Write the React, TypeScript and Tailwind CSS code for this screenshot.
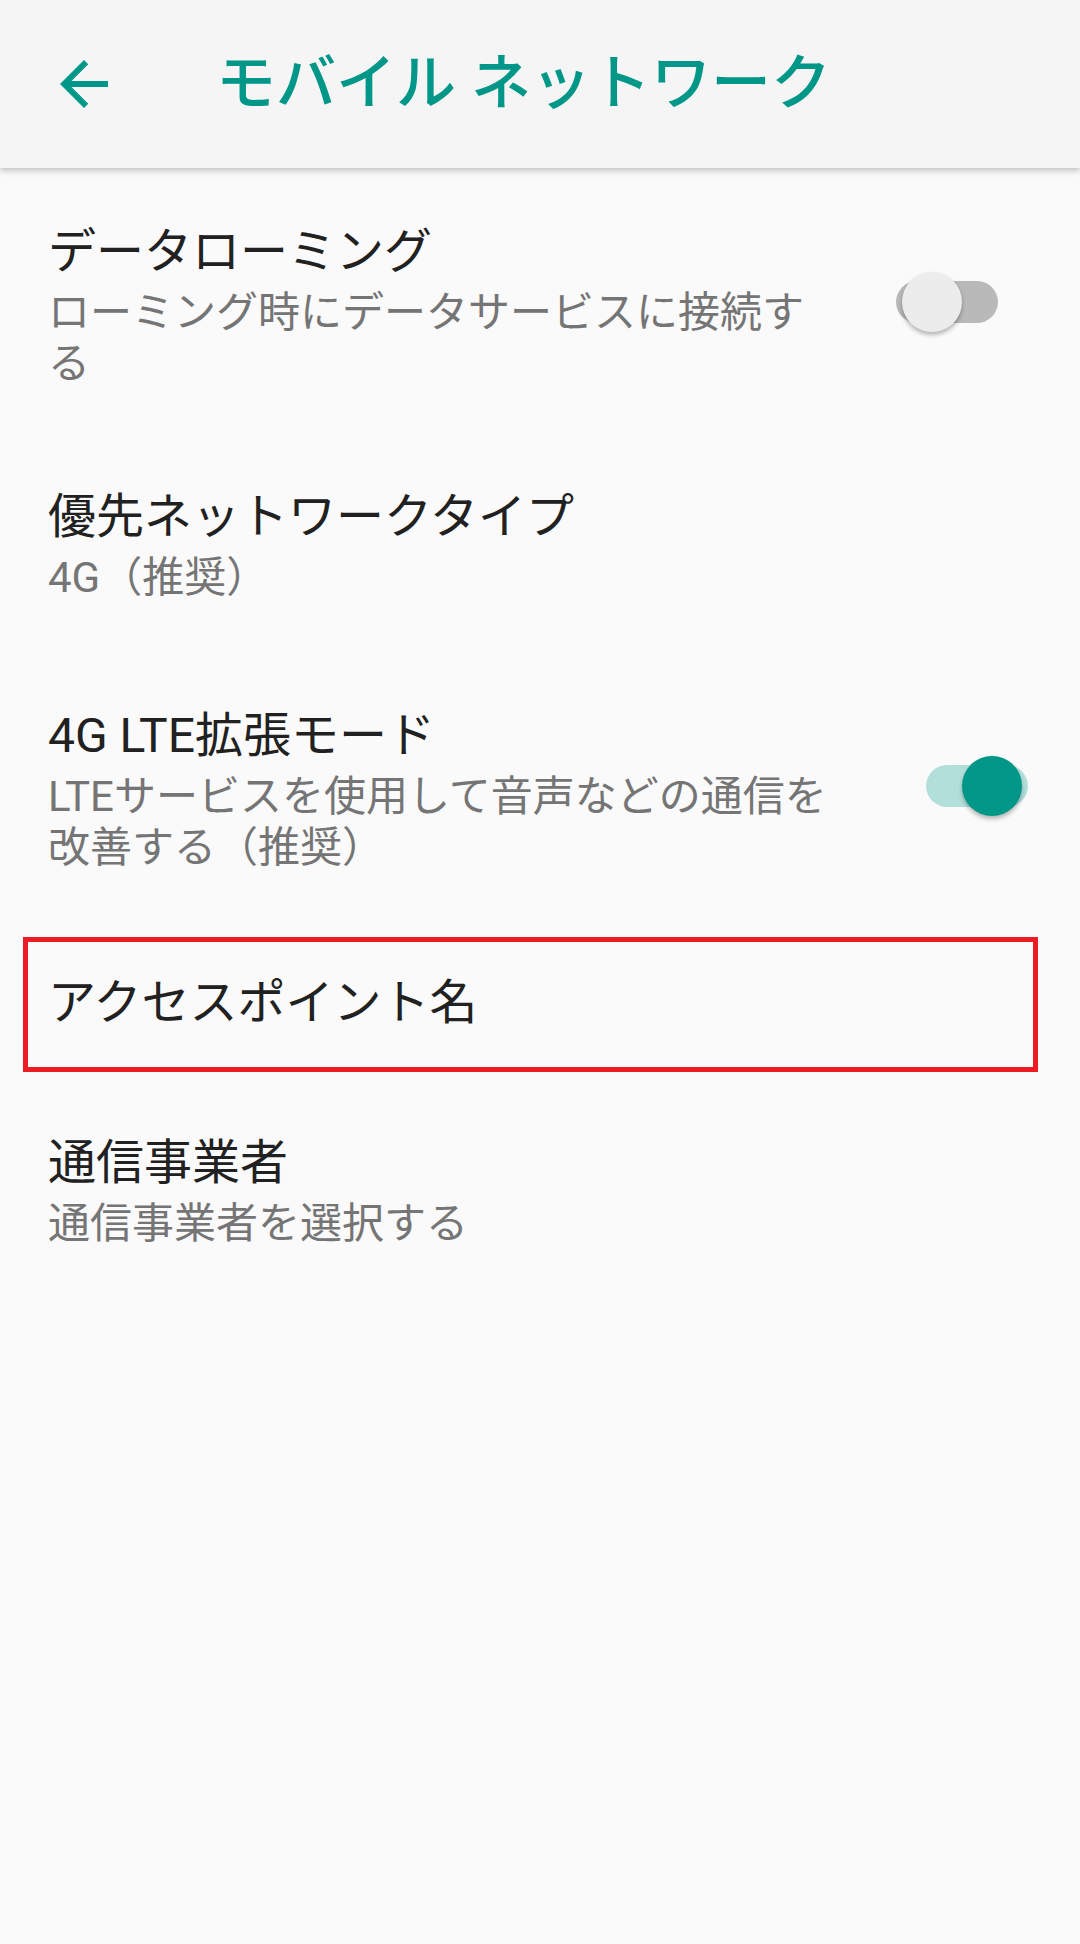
import React from 'react';

type SwitchProps = { on: boolean; className?: string };

const Toggle: React.FC<SwitchProps> = ({ on, className = '' }) => {
  return (
    <div className={`relative w-[102px] h-[42px] shrink-0 ${className}`}>
      <div className={`absolute inset-0 rounded-full ${on ? 'bg-[#b3dfdb]' : 'bg-[#b9b9b9]'}`} />
      <div
        className={`absolute top-[-9px] w-[60px] h-[60px] rounded-full shadow-[0_3px_4px_rgba(0,0,0,0.28)] ${
          on ? 'right-[6px] bg-[#009688]' : 'left-[6px] bg-[#ececec]'
        }`}
      />
    </div>
  );
};

const ArrowBack = () => (
  <svg viewBox="0 0 24 24" className="w-[72px] h-[72px]" fill="#009688">
    <path d="M20 11H7.83l5.59-5.59L12 4l-8 8 8 8 1.41-1.41L7.83 13H20v-2z" />
  </svg>
);

const App: React.FC = () => {
  return (
    <div className="w-[1080px] min-h-[1944px] bg-[#fafafa] font-[Roboto,'Noto_Sans_CJK_JP',sans-serif]">
      {/* Toolbar */}
      <header className="relative z-10 h-[168px] bg-[#f5f5f5] flex items-center pl-[48px] shadow-[0_3px_6px_rgba(0,0,0,0.22)]">
        <ArrowBack />
        <h1 className="ml-[96px] text-[60px] leading-none font-medium text-[#009688]">モバイル ネットワーク</h1>
      </header>

      {/* データローミング */}
      <div className="h-[267px] flex items-center pl-[48px]">
        <div className="w-[786px] pt-[2px]">
          <div className="text-[48px] leading-[71px] text-[#212121]">データローミング</div>
          <div className="text-[42px] leading-[51px] text-[#757575]">ローミング時にデータサービスに接続する</div>
        </div>
        <Toggle on={false} className="ml-[62px]" />
      </div>

      {/* 優先ネットワークタイプ */}
      <div className="h-[219px] pl-[48px] pt-[46px]">
        <div className="text-[48px] leading-[71px] text-[#212121]">優先ネットワークタイプ</div>
        <div className="text-[42px] leading-[51px] text-[#757575]">4G（推奨）</div>
      </div>

      {/* 4G LTE拡張モード */}
      <div className="h-[270px] flex items-center pl-[48px]">
        <div className="w-[786px] pb-[6px]">
          <div className="text-[48px] leading-[71px] text-[#212121]">4G LTE拡張モード</div>
          <div className="text-[42px] leading-[51px] text-[#757575]">LTEサービスを使用して音声などの通信を改善する（推奨）</div>
        </div>
        <Toggle on={true} className="ml-[92px] mt-[-6px]" />
      </div>

      {/* アクセスポイント名 */}
      <div className="relative h-[157px] flex items-center pl-[48px]">
        <div className="text-[48px] leading-[71px] text-[#212121]">アクセスポイント名</div>
        <div className="absolute left-[23px] right-[42px] top-[13px] bottom-[9px] border-[5px] border-[#ed1c24]" />
      </div>

      {/* 通信事業者 */}
      <div className="h-[219px] pl-[48px] pt-[46px]">
        <div className="text-[48px] leading-[71px] text-[#212121]">通信事業者</div>
        <div className="text-[42px] leading-[51px] text-[#757575]">通信事業者を選択する</div>
      </div>
    </div>
  );
};

export default App;
